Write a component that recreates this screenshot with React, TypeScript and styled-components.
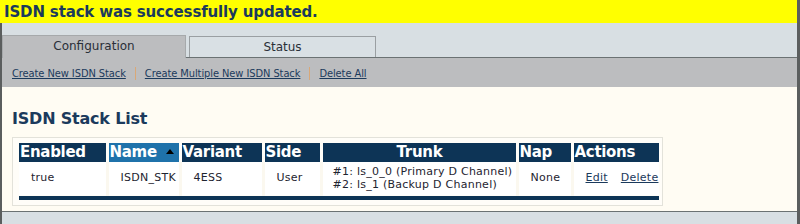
import React from 'react';
import styled, { createGlobalStyle } from 'styled-components';

const GlobalStyle = createGlobalStyle`
  body {
    margin: 0;
    background: #fffcf3;
    font-family: 'DejaVu Sans', Verdana, sans-serif;
  }
`;

type Column = { key: string; label: string; width: number; sorted?: boolean; center?: boolean };

const columns: Column[] = [
  { key: 'enabled', label: 'Enabled', width: 88 },
  { key: 'name', label: 'Name', width: 73, sorted: true },
  { key: 'variant', label: 'Variant', width: 83 },
  { key: 'side', label: 'Side', width: 58 },
  { key: 'trunk', label: 'Trunk', width: 196, center: true },
  { key: 'nap', label: 'Nap', width: 55 },
  { key: 'actions', label: 'Actions', width: 87 },
];

const App: React.FC = () => {
  return (
    <Page>
      <GlobalStyle />
      <Banner>ISDN stack was successfully updated.</Banner>
      <Body>
        <TabRow>
          <Tab active>Configuration</Tab>
          <Tab>Status</Tab>
        </TabRow>
        <LinkBar>
          <BarLink href="#">Create New ISDN Stack</BarLink>
          <Sep />
          <BarLink href="#">Create Multiple New ISDN Stack</BarLink>
          <Sep />
          <BarLink href="#">Delete All</BarLink>
        </LinkBar>
        <Content>
          <Title>ISDN Stack List</Title>
          <TableBox>
            <Table>
              <colgroup>
                {columns.map((c) => (
                  <col key={c.key} style={{ width: c.width }} />
                ))}
              </colgroup>
              <thead>
                <tr>
                  {columns.map((c) => (
                    <Th key={c.key} sorted={c.sorted} center={c.center}>
                      {c.label}
                      {c.sorted && <SortArrow />}
                    </Th>
                  ))}
                </tr>
              </thead>
              <tbody>
                <tr>
                  <Td>true</Td>
                  <Td>ISDN_STK</Td>
                  <Td>4ESS</Td>
                  <Td>User</Td>
                  <Td narrow>
                    #1: ls_0_0 (Primary D Channel)
                    <br />
                    #2: ls_1 (Backup D Channel)
                  </Td>
                  <Td>None</Td>
                  <Td>
                    <RowLink href="#">Edit</RowLink>
                    <RowLink href="#">Delete</RowLink>
                  </Td>
                </tr>
              </tbody>
              <tfoot>
                <tr>
                  <FootBar colSpan={7} />
                </tr>
              </tfoot>
            </Table>
          </TableBox>
        </Content>
        <BottomStrip />
      </Body>
    </Page>
  );
};

const Page = styled.div`
  width: 800px;
  height: 224px;
  box-sizing: border-box;
  border-right: 3px solid #5b5e5e;
  display: flex;
  flex-direction: column;
  overflow: hidden;
`;

const Banner = styled.div`
  height: 23px;
  background: #ffff00;
  padding-left: 4px;
  font-size: 15px;
  font-weight: bold;
  line-height: 24px;
  letter-spacing: -0.15px;
  color: #1b3a5c;
  white-space: nowrap;
`;

const Body = styled.div`
  flex: 1;
  display: flex;
  flex-direction: column;
  border-left: 2px solid #5b5e5e;
`;

const TabRow = styled.div`
  height: 35px;
  box-sizing: border-box;
  background: #d8dfe3;
  display: flex;
  align-items: flex-end;
  gap: 3px;
  border-bottom: 1px solid #6b7273;
`;

const Tab = styled.div<{ active?: boolean }>`
  box-sizing: border-box;
  width: ${(p) => (p.active ? 184 : 187)}px;
  height: ${(p) => (p.active ? 23 : 21)}px;
  margin-bottom: ${(p) => (p.active ? -1 : 0)}px;
  background: ${(p) => (p.active ? '#bcbdbf' : '#d9e0e4')};
  border: 1px solid ${(p) => (p.active ? '#a6a9ab' : '#9a9fa2')};
  border-bottom: none;
  text-align: center;
  font-size: 12px;
  line-height: 21px;
  color: #2a2f38;
`;

const LinkBar = styled.div`
  height: 29px;
  background: #bcbdbf;
  display: flex;
  align-items: center;
  padding-left: 10px;
  padding-top: 1px;
  box-sizing: border-box;
`;

const BarLink = styled.a`
  font-family: 'DejaVu Sans Condensed', 'DejaVu Sans', sans-serif;
  font-size: 11px;
  letter-spacing: -0.08px;
  color: #1b3a5c;
  text-decoration: underline;
`;

const Sep = styled.span`
  width: 1px;
  height: 13px;
  background: #d9a877;
  margin: 0 9px;
`;

const Content = styled.div`
  flex: 1;
  background: #fffcf3;
  padding: 22px 0 0 10px;
`;

const Title = styled.h2`
  margin: 0 0 8px 0;
  font-size: 16px;
  font-weight: bold;
  line-height: 20px;
  letter-spacing: -0.2px;
  color: #1b3a5c;
`;

const TableBox = styled.div`
  width: 651px;
  box-sizing: border-box;
  border: 1px solid #e3e2da;
  background: #fffdf8;
  padding: 5px 4px 5px 6px;
`;

const Table = styled.table`
  width: 640px;
  table-layout: fixed;
  border-collapse: collapse;
`;

const Th = styled.th<{ sorted?: boolean; center?: boolean }>`
  height: 19px;
  padding: 0 0 0 1px;
  background: ${(p) => (p.sorted ? '#1f72aa' : '#0d3456')};
  border-right: 3px solid #fffdf8;
  color: #ffffff;
  font-size: 15px;
  font-weight: 900;
  text-align: ${(p) => (p.center ? 'center' : 'left')};
  white-space: nowrap;
  line-height: 19px;
  letter-spacing: -0.3px;
  &:last-child {
    border-right: none;
  }
`;

const SortArrow = styled.span`
  display: inline-block;
  width: 0;
  height: 0;
  margin-left: 9px;
  vertical-align: 3px;
  border-left: 4px solid transparent;
  border-right: 4px solid transparent;
  border-bottom: 5px solid #000;
`;

const Td = styled.td<{ narrow?: boolean }>`
  height: 33px;
  padding: 0 0 0 ${(p) => (p.narrow ? 10 : 12)}px;
  background: #ffffff;
  border-right: 3px solid #fbf8ef;
  font-size: 11px;
  letter-spacing: 0.25px;
  line-height: 12.5px;
  color: #1e2430;
  white-space: nowrap;
  &:last-child {
    border-right: none;
  }
`;

const RowLink = styled.a`
  color: #1b3a5c;
  text-decoration: underline;
  margin-right: 13px;
  &:last-child {
    margin-right: 0;
  }
`;

const FootBar = styled.td`
  height: 4px;
  padding: 0;
  background: #0d3456;
  border-top: 1px solid #fffdf8;
`;

const BottomStrip = styled.div`
  height: 12px;
  background: #d8dfe3;
  border-top: 1px solid #6b7273;
`;

export default App;
